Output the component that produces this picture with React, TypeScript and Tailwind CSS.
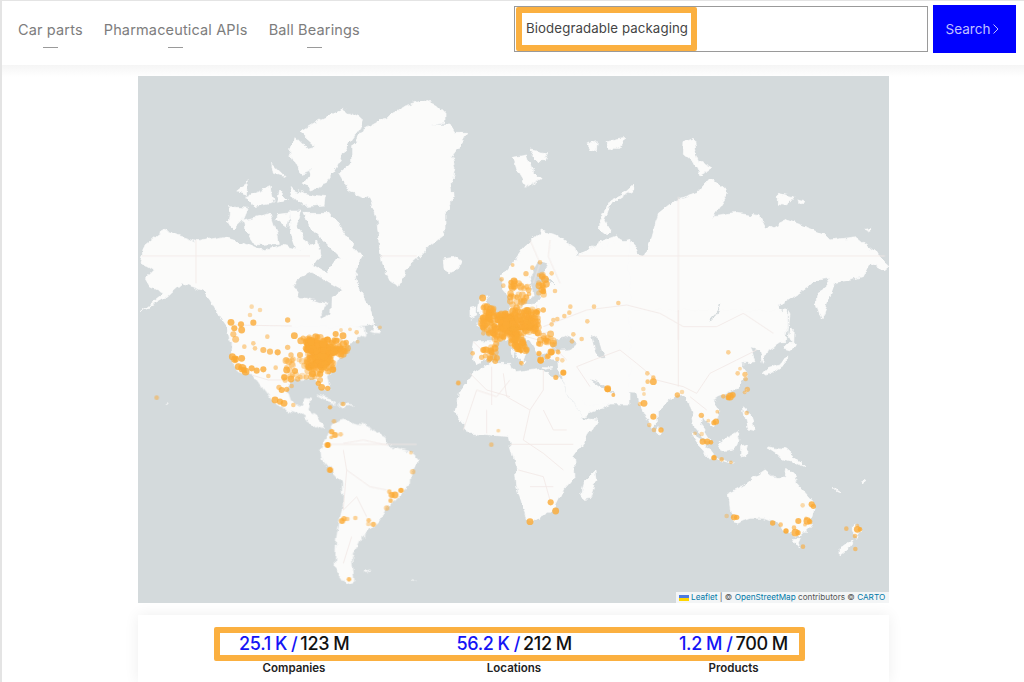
import React from "react";

const LAND = "#fbfbfa";
const SEA = "#d4dadc";
const BORDER = "#f2e8e6";
const DOT = "#fbaa35";

type D = [number, number, number?, number?];

let seed = 1234;
const rnd = () => {
  seed = (seed * 16807) % 2147483647;
  return seed / 2147483647;
};
const parse = (s: string) => s.split(" ").map((t) => t.split(",").map(Number));
const inside = (x: number, y: number, pts: number[][]) => {
  let c = false;
  for (let i = 0, j = pts.length - 1; i < pts.length; j = i++) {
    const [xi, yi] = pts[i];
    const [xj, yj] = pts[j];
    if (yi > y !== yj > y && x < ((xj - xi) * (y - yi)) / (yj - yi) + xi) c = !c;
  }
  return c;
};
const fill = (s: string, n: number, op = 0.6): D[] => {
  const pts = parse(s);
  const xs = pts.map((p) => p[0]);
  const ys = pts.map((p) => p[1]);
  const x0 = Math.min(...xs);
  const x1 = Math.max(...xs);
  const y0 = Math.min(...ys);
  const y1 = Math.max(...ys);
  const out: D[] = [];
  let guard = 0;
  while (out.length < n && guard++ < n * 50) {
    const x = x0 + rnd() * (x1 - x0);
    const y = y0 + rnd() * (y1 - y0);
    if (inside(x, y, pts)) out.push([x, y, 6.5 + rnd() * 3, op * (0.7 + rnd() * 0.6)]);
  }
  return out;
};

const Poly = ({ p, f = LAND }: { p: string; f?: string }) => <polygon points={p} fill={f} stroke={f} strokeWidth={2} strokeLinejoin="round" />;
const Dots = ({ d }: { d: D[] }) => (
  <>
    {d.map(([x, y, r = 8, o = 0.8], i) => (
      <circle key={i} cx={x} cy={y} r={r * 1.15} fill={DOT} fillOpacity={o} />
    ))}
  </>
);

const z5Land = [
  "880,90 920,105 945,130 945,160 900,165 960,165 975,190 1010,190 990,225 965,260 975,290 965,340 970,380 945,430 945,490 900,525 860,570 825,600 810,652 785,640 760,590 750,540 740,450 720,385 660,365 628,310 665,280 665,230 700,180 790,130 830,105",
  "510,185 570,150 640,118 697,145 690,175 650,230 620,290 590,340 545,360 520,340 545,300 510,310 480,250 495,200 530,235 560,230",
  "300,410 355,415 340,450 310,480 295,455",
  "340,450 420,430 440,490 445,520 375,525 345,480",
  "522,430 600,430 640,490 697,560 680,590 640,570 600,530 540,470",
  "318,365 355,335 352,375",
  "350,380 420,350 430,400 370,410",
  "425,280 465,320 430,310",
  "450,360 472,390 440,400",
  "480,350 520,370 585,380 582,405 520,410 490,380",
  "445,430 482,425 472,472 440,450",
  "482,420 515,420 500,470 540,530 500,540 480,480",
  "30,575 45,525 100,480 200,515 280,500 340,520 400,545 460,525 510,540 560,510 575,560 545,585 590,610 620,565 690,570 670,620 720,715 735,760 680,770 670,800 620,815 300,815 290,770 265,735 240,690 215,660 155,640 110,680 30,725 100,670 60,650 45,625 70,600",
  "735,765 755,785 730,790",
];
const z5Sea = ["545,605 510,620 490,650 510,680 560,690 590,700 575,742 600,730 602,680 640,662 600,640"];

const z6Land = [
  "190,585 215,560 240,530 320,500 370,520 385,555 400,560 420,520 445,430 490,395 560,370 600,325 655,370 610,440 680,430 750,440 770,480 830,450 940,490 960,510 1040,500 1100,550 1138,585 1120,600 1080,580 1060,620 1020,630 960,640 960,625 920,630 870,665 800,710 830,730 830,815 100,815 100,600",
  "965,620 972,645 935,750 918,700 920,680",
  "370,345 340,372 300,392 285,420 265,470 292,492 300,480 285,450 300,405 340,378 375,355",
  "10,262 50,255 65,300 92,325 50,352 25,310",
  "60,240 110,248 100,275 85,275",
  "230,225 265,215 262,245 240,240",
  "285,215 350,205 330,235 295,235",
  "522,215 550,205 555,240 570,275 605,295 570,315 555,280 520,250",
  "805,370 850,380 830,405 805,400",
  "860,390 885,395 880,405",
  "1062,478 1085,475 1080,486",
  "835,725 840,735 832,800",
];

const z7Land = [
  "300,-10 700,-10 705,15 680,30 650,45 630,75 610,120 590,135 600,180 575,178 555,145 480,150 470,175 482,212 510,228 525,205 540,208 535,240 560,255 582,295 570,295 540,275 505,250 470,240 430,215 395,170 370,135 330,130 305,85",
  "610,280 640,270 700,285 765,320 770,345 840,365 865,390 840,430 838,470 800,510 770,530 750,570 715,605 690,625 665,680 672,755 650,762 615,710 620,620 640,520 640,460 580,390 575,360 600,300",
  "555,195 600,205 620,220 590,212",
  "625,222 670,228 640,232",
  "702,725 720,720 710,728",
  "850,745 858,752 852,750",
  "105,215 112,218 108,220",
  "715,5 750,5 755,12 725,10",
];
const z9Land = [
  "95,385 100,350 165,350 145,325 110,298 165,285 210,250 212,215 190,190 185,160 215,120 250,70 305,18 350,30 405,68 415,100 375,115 430,80 570,40 570,540 445,540 375,470 370,440 375,408 320,405 320,380 300,395 310,410 290,385 270,350 225,320 255,385 245,410 235,400 205,340 190,340 165,365 155,395 110,415",
  "120,220 140,215 150,260 170,285 130,300 110,292 125,270 115,250",
  "90,250 110,245 110,270 90,280",
  "10,105 50,98 65,110 55,130 30,140 12,128",
  "212,350 218,350 216,370",
  "215,375 222,375 220,395",
  "235,412 255,408 250,420",
  "310,425 335,425 320,430",
];
const z9Sea = [
  "345,345 375,335 400,345 415,360 385,375 345,378 335,360",
  "455,330 475,345 485,380 495,395 480,395 465,370",
  "295,110 270,155 285,210 260,225 240,225 245,240 290,235 300,215 295,175 325,170 345,180 310,145 320,115",
  "455,465 490,490 525,505 490,478",
];
const z8Land = [
  "-155,190 -110,130 -60,100 5,100 15,125 90,115 155,150 175,195 215,265 262,270 240,310 190,380 195,440 160,480 130,540 70,575 50,570 20,470 15,400 0,345 -5,320 -60,315 -120,310 -165,250",
  "150,130 175,190 215,262 300,225 315,195 290,182 265,175 245,145 300,185 380,190 385,215 425,295 445,275 445,240 500,195 530,195 545,240 555,295 590,335 600,335 570,285 575,262 610,290 630,245 605,210 640,195 680,175 712,130 690,100 735,95 722,50 750,60 760,100 775,60 820,30 830,-60 130,-60",
  "215,490 225,450 255,420 258,450 240,505 222,508",
  "757,130 770,115 810,105 830,75 830,100 800,120 770,135",
  "825,55 835,40 858,40 845,60",
  "842,-5 850,-5 848,45 838,20",
  "705,185 715,175 700,195",
  "700,230 720,250 735,300 715,295 705,260",
  "625,340 680,305 690,330 670,360 640,365",
  "540,310 580,335 610,375 600,385 565,345",
  "605,380 670,400 640,394",
  "695,350 715,345 710,375 695,378",
  "770,350 830,360 885,410 850,395 815,385 800,370",
  "445,290 458,305 445,310",
  "655,490 705,465 735,440 765,420 790,440 825,445 830,415 850,430 870,470 905,510 915,540 900,590 870,620 830,605 800,580 760,565 720,565 680,580 665,570",
  "850,625 875,625 865,648",
  "1030,580 1055,600 1040,622 1030,605",
  "1030,625 1020,650 990,675 990,655",
  "975,475 990,485 980,482",
  "1055,455 1068,450 1060,460",
];

const z10Blob = [
  "268,120 300,118 330,125 350,140 385,138 385,150 350,170 345,195 320,205 295,200 290,165 270,145",
  "52,170 68,170 64,186 56,184",
  "72,200 92,203 96,218 82,217",
];
const z10Dots: D[] = [
  [48, 67, 9], [78, 73, 8], [115, 68, 8], [58, 85, 8], [80, 90, 9], [55, 103, 8, 0.6], [62, 118, 9, 0.6], [88, 140, 6, 0.5], [115, 130, 6, 0.5], [120, 145, 6, 0.5], [145, 150, 8, 0.7], [165, 155, 8, 0.7], [188, 157, 8], [157, 110, 6, 0.5],
  [110, 20, 6, 0.4], [135, 30, 6, 0.4], [105, 45, 6, 0.4], [218, 60, 7, 0.7], [238, 107, 9], [218, 142, 7, 0.6], [228, 165, 7, 0.6], [255, 165, 8, 0.7], [145, 208, 8], [182, 203, 6, 0.5], [215, 210, 9], [240, 213, 8], [208, 232, 8], [228, 237, 9], [248, 237, 7, 0.6], [160, 228, 6, 0.5], [192, 262, 7, 0.6], [200, 270, 8], [215, 268, 7, 0.7], [230, 258, 6, 0.5], [180, 300, 9], [195, 305, 8], [207, 310, 9], [235, 315, 6, 0.5], [300, 230, 7, 0.5], [315, 240, 8, 0.6], [320, 262, 9], [338, 265, 7], [310, 250, 7], [345, 322, 6, 0.4], [385, 312, 6, 0.4], [495, 82, 5, 0.4], [425, 97, 6, 0.5], [428, 125, 5, 0.4], [405, 88, 5, 0.4], [378, 90, 5, 0.4], [362, 102, 8], [384, 107, 9], [110, 205, 8], [125, 212, 8], [80, 175, 9], [60, 178, 10], [52, 170, 9], [82, 205, 11], [92, 215, 10], [70, 200, 9],
  ...fill("255,105 300,105 335,115 395,125 400,155 365,180 365,205 330,225 290,225 270,190 280,170 260,150", 170, 0.6),
  ...fill("210,175 290,170 300,230 205,245", 28, 0.45),
];

const z9Blob = [
  "140,255 155,258 158,295 135,285",
  "180,272 218,265 240,305 285,298 285,315 232,315 222,340 208,330 175,315",
  "228,340 248,382 242,385 215,345",
];
const z9Dots: D[] = [
  [128, 219, 9], [130, 375, 8], [165, 370, 9], [150, 400, 8, 0.7], [98, 385, 6, 0.6], [125, 397, 7, 0.6], [55, 473, 6, 0.5], [185, 163, 6, 0.5], [190, 182, 6, 0.5], [218, 120, 5, 0.5], [258, 146, 7, 0.6], [277, 128, 6, 0.5], [300, 112, 6, 0.5], [222, 168, 9], [213, 172, 7], [315, 163, 10], [296, 150, 5, 0.5], [335, 145, 6, 0.5], [310, 200, 7, 0.6], [345, 198, 6, 0.5], [267, 207, 6, 0.6], [391, 245, 6, 0.5], [388, 263, 6, 0.5], [373, 273, 6, 0.5], [462, 245, 6, 0.5], [535, 234, 6, 0.5], [442, 289, 6, 0.5], [400, 328, 6, 0.5], [425, 342, 6, 0.5], [396, 349, 6, 0.5], [353, 380, 6, 0.5], [333, 381, 9], [322, 395, 7, 0.7], [297, 385, 7, 0.7], [302, 405, 9], [352, 402, 6, 0.5], [367, 406, 6, 0.4], [370, 443, 8], [347, 457, 7, 0.5], [503, 491, 9], [520, 510, 5, 0.5], [243, 413, 5, 0.5], [290, 262, 7], [310, 255, 7, 0.7], [335, 298, 6, 0.5], [352, 282, 6, 0.5], [340, 285, 6, 0.5], [122, 300, 6, 0.5], [130, 325, 6, 0.5],
  ...fill("130,240 165,250 175,265 225,255 295,250 295,325 240,325 265,385 240,390 205,340 165,345 130,320 122,290", 300, 0.55),
  ...fill("205,165 265,180 270,200 240,255 205,240", 34, 0.5),
  ...fill("295,150 320,150 320,210 295,210", 12, 0.6),
  ...fill("295,330 345,325 340,362 295,362", 16, 0.5),
  ...fill("135,350 175,350 170,410 135,410", 16, 0.55),
];
const z7Dots: D[] = [
  [80, 203, 6, 0.5], [985, 160, 6, 0.5], [1105, 302, 5, 0.4], [1084, 344, 6, 0.5], [612, 274, 6, 0.5], [605, 305, 7], [615, 315, 8], [632, 313, 6, 0.5], [604, 322, 5, 0.6], [593, 345, 8, 1], [600, 420, 8, 0.9], [843, 368, 5, 0.4], [848, 425, 7, 0.5], [778, 485, 6, 0.6], [813, 481, 7, 0.9], [795, 495, 9], [785, 495, 8], [782, 512, 6, 0.7], [770, 534, 7, 0.5], [636, 573, 8], [642, 566, 7, 0.7], [652, 567, 6, 0.5], [676, 564, 6, 0.5], [716, 571, 6, 0.6], [730, 583, 7, 0.7], [715, 582, 6, 0.4], [657, 748, 6, 0.7], [638, 222, 6, 0.4], [600, 232, 5, 0.5],
];
const z8Dots: D[] = [
  [122, 517, 8], [137, 543, 9], [60, 575, 9], [293, 178, 8], [310, 195, 5, 0.5], [160, 128, 7, 0.7], [138, 143, 6, 0.5], [125, 67, 8], [115, 78, 7, 0.6], [92, 92, 8], [87, 72, 6, 0.5], [145, 67, 6, 0.5], [35, 100, 6, 0.5], [655, 67, 6, 0.5],
  [412, 130, 6, 0.5], [413, 155, 6, 0.6], [430, 155, 9], [430, 143, 6, 0.6], [400, 177, 6, 0.4], [402, 192, 5, 0.4], [402, 220, 9], [390, 222, 6, 0.5], [430, 260, 8], [418, 285, 6, 0.5], [432, 300, 6, 0.5], [453, 300, 7], [502, 195, 7, 0.7], [516, 186, 6, 0.4],
  [640, 199, 6, 0.6], [660, 200, 10], [668, 195, 8], [655, 203, 7], [705, 133, 7, 0.6], [707, 147, 6, 0.5], [683, 130, 6, 0.5], [690, 116, 5, 0.4], [712, 178, 7, 0.6], [704, 187, 5, 0.5], [710, 249, 6, 0.5], [622, 245, 5, 0.5], [574, 256, 7, 0.7], [595, 272, 5, 0.4], [618, 275, 8], [612, 278, 7], [555, 310, 5, 0.4], [575, 312, 6, 0.4], [578, 335, 8], [592, 335, 8], [603, 337, 6, 0.8], [612, 383, 7, 0.9], [635, 388, 6, 0.6], [663, 397, 5, 0.5],
  [650, 558, 6, 0.4], [672, 562, 8], [680, 562, 7], [788, 579, 7, 0.8], [812, 584, 6, 0.6], [828, 603, 7, 0.9], [852, 593, 6, 0.6], [856, 608, 10], [864, 608, 7], [865, 573, 8], [892, 573, 10], [899, 575, 7], [888, 565, 5, 0.5], [885, 584, 5, 0.5], [878, 526, 6, 0.4], [905, 523, 8], [910, 529, 7], [879, 650, 6, 0.6], [1009, 596, 6, 0.6], [1042, 598, 9], [1050, 598, 6], [1042, 587, 5, 0.5], [1035, 618, 6, 0.6], [1036, 657, 6, 0.6],
];

const borders = {
  z8: "M-20,130 L-10,200 L60,240 L100,180 L100,120 M0,200 L-70,180 L-120,130 M100,240 L130,300 L170,300 M60,240 L40,330 L100,370 L160,420 M25,420 L100,440 L120,510 M60,470 L130,470 M250,90 L330,60 L380,100 L440,150 L520,170 L560,190 L600,130 L680,90 L740,60 M-20,0 L120,40 L170,90 M250,90 L200,110 L240,170 M505,-60 L505,170 M540,200 L590,240 M0,343 L190,343",
  z7: "M640,340 L700,330 L770,345 M640,360 L650,420 L720,470 L770,480 M650,420 L640,540 L680,500 L710,560 M665,620 L640,700 M1000,300 L1040,180 L1100,200 L1140,150 M1070,240 L1070,310 M578,343 L860,343",
  z10: "M50,75 L230,78 M110,225 L160,240 L210,240",
  z6: "M100,770 L230,720 L350,705 L450,730 L520,770 L620,770 L700,730 L790,790 M505,380 L505,810 M205,558 L1125,558 M60,510 L90,580 L70,640 M120,510 L115,560 L150,640",
  z5: "M35,558 L540,558 M750,558 L860,558 M198,510 L198,640",
  z9: "M165,300 L210,340 M230,300 L230,250 M290,240 L290,320 M280,330 L340,320 M100,350 L150,400 M155,425 L155,540",
};

function WorldMap() {
  return (
    <svg viewBox="138 76 751 527" className="block w-full h-full blur-[0.4px]">
      <defs>
        <filter id="coast" filterUnits="userSpaceOnUse" x="138" y="76" width="751" height="527">
          <feTurbulence type="fractalNoise" baseFrequency="0.11" numOctaves="3" seed="7" result="n" />
          <feDisplacementMap in="SourceGraphic" in2="n" scale="7" xChannelSelector="R" yChannelSelector="G" />
        </filter>
      </defs>
      <rect x="138" y="76" width="751" height="527" fill={SEA} />
      <g filter="url(#coast)">
        <g transform="translate(130 70) scale(0.33333)">
          {z5Land.map((p, i) => <Poly key={i} p={p} />)}
          {z5Sea.map((p, i) => <Poly key={i} p={p} f={SEA} />)}
        </g>
        <g transform="translate(510 70) scale(0.33333)">
          {z6Land.map((p, i) => <Poly key={i} p={p} />)}
        </g>
        <g transform="translate(130 330) scale(0.33333)">
          {z7Land.map((p, i) => <Poly key={i} p={p} />)}
        </g>
        <g transform="translate(510 330) scale(0.33333)">
          {z8Land.map((p, i) => <Poly key={i} p={p} />)}
        </g>
        <g transform="translate(440 225) scale(0.33333)">
          {z9Land.map((p, i) => <Poly key={i} p={p} />)}
          {z9Sea.map((p, i) => <Poly key={i} p={p} f={SEA} />)}
        </g>
        <g transform="translate(510 70) scale(0.33333)" fill="none" stroke={SEA}>
          <path d="M600,750 Q625,730 632,700" strokeWidth="4" />
          <path d="M385,510 L400,555 L415,520" strokeWidth="4" />
        </g>
      </g>
      <g fill="none" stroke={BORDER} strokeWidth="2.5">
        <path d={borders.z5} transform="translate(130 70) scale(0.33333)" />
        <path d={borders.z6} transform="translate(510 70) scale(0.33333)" />
        <path d={borders.z7} transform="translate(130 330) scale(0.33333)" />
        <path d={borders.z8} transform="translate(510 330) scale(0.33333)" />
        <path d={borders.z9} transform="translate(440 225) scale(0.33333)" />
        <path d={borders.z10} transform="translate(215 300) scale(0.33333)" />
      </g>
      <g transform="translate(440 225) scale(0.33333)">
        {z9Blob.map((p, i) => <Poly key={i} p={p} f={DOT} />)}
        <Dots d={z9Dots} />
      </g>
      <g transform="translate(215 300) scale(0.33333)">
        {z10Blob.map((p, i) => <Poly key={i} p={p} f={DOT} />)}
        <Dots d={z10Dots} />
      </g>
      <g transform="translate(130 330) scale(0.33333)"><Dots d={z7Dots} /></g>
      <g transform="translate(510 330) scale(0.33333)"><Dots d={z8Dots} /></g>
    </svg>
  );
}

function NavItem({ label }: { label: string }) {
  return (
    <div className="flex flex-col items-center">
      <span className="text-[14.5px] leading-[20px] tracking-[0.15px] text-[#7d7d7d] whitespace-nowrap">{label}</span>
      <span className="mt-[7px] block h-px w-[15px] bg-[#9a9a9a]" />
    </div>
  );
}

function Stat({ a, b }: { a: string; b: string }) {
  return (
    <div className="text-[18px] leading-[22px] whitespace-nowrap tracking-[-0.3px] font-medium [word-spacing:-0.5px]">
      <span className="text-[#1414f5]">{a} /</span>
      <span className="ml-[3px] text-[#111111]">{b}</span>
    </div>
  );
}

export default function App() {
  return (
    <div
      className="h-[682px] w-[1024px] overflow-hidden bg-white border-l-2 border-t border-[#e4e4e4] flex flex-col"
      style={{ fontFamily: "Inter, 'Noto Sans', sans-serif" }}
    >
      <header className="h-[64px] shrink-0 bg-white flex items-center pl-[16px] pr-[8px]">
        <nav className="flex gap-[21px] mt-[2px]">
          <NavItem label="Car parts" />
          <NavItem label="Pharmaceutical APIs" />
          <NavItem label="Ball Bearings" />
        </nav>
        <div className="ml-auto self-start mt-[4px] flex items-center gap-[5px]">
          <div className="w-[414px] h-[46px] border border-[#9a9a9a] bg-white flex items-stretch pl-px">
            <div className="w-[181px] border-[6px] border-[#fbb040] rounded-[2px] flex items-center pl-[4px] text-[13.25px] text-[#444444] whitespace-nowrap tracking-[0.1px]">
              Biodegradable packaging
            </div>
          </div>
          <button className="w-[83px] h-[48px] bg-[#0000ff] flex items-center justify-center gap-[2px] pr-[3px] text-[13.5px] text-[#c0c0ff]">
            Search
            <svg width="8" height="12" viewBox="0 0 8 12" fill="none" stroke="#c0c0ff" strokeWidth="1">
              <path d="M1.5 1.5 L6 6 L1.5 10.5" />
            </svg>
          </button>
        </div>
      </header>
      <main className="flex-1 flex flex-col items-center bg-gradient-to-b from-[#f5f5f5] to-white to-[12px] pt-[11px]">
        <div className="relative w-[751px] h-[527px] shrink-0 ml-[1px]">
          <WorldMap />
          <div className="absolute right-0 bottom-0 h-[11px] w-[213px] bg-[#f3f5f6] flex items-center pl-[3px] text-[8.2px] leading-none text-[#555555] whitespace-nowrap">
            <svg width="10" height="6" viewBox="0 0 10 6" className="mr-[2px] shrink-0">
              <rect width="10" height="3" fill="#4c7be1" />
              <rect y="3" width="10" height="3" fill="#ffd500" />
            </svg>
            <span className="text-[#0078a8]">Leaflet</span>
            <span>&nbsp;|&nbsp;©&nbsp;</span>
            <span className="text-[#0078a8]">OpenStreetMap</span>
            <span>&nbsp;contributors ©&nbsp;</span>
            <span className="text-[#0078a8]">CARTO</span>
          </div>
        </div>
        <section className="mt-[12px] w-[751px] flex-1 ml-[1px] bg-white shadow-[0_0_14px_rgba(0,0,0,0.07)] pt-[12px] pl-[76px]">
          <div className="w-[591px] h-[34px] border-[6px] border-[#fbb040] rounded-[2px] flex items-center justify-between pl-[19px] pr-[11px]">
            <Stat a="25.1 K" b="123 M" />
            <Stat a="56.2 K" b="212 M" />
            <Stat a="1.2 M" b="700 M" />
          </div>
          <div className="w-[591px] flex justify-between pl-[25px] pr-[17px] text-[11.5px] leading-[14px] font-semibold text-[#222222]">
            <span className="w-[110px] text-center">Companies</span>
            <span className="w-[114px] text-center">Locations</span>
            <span className="w-[109px] text-center">Products</span>
          </div>
        </section>
      </main>
    </div>
  );
}
